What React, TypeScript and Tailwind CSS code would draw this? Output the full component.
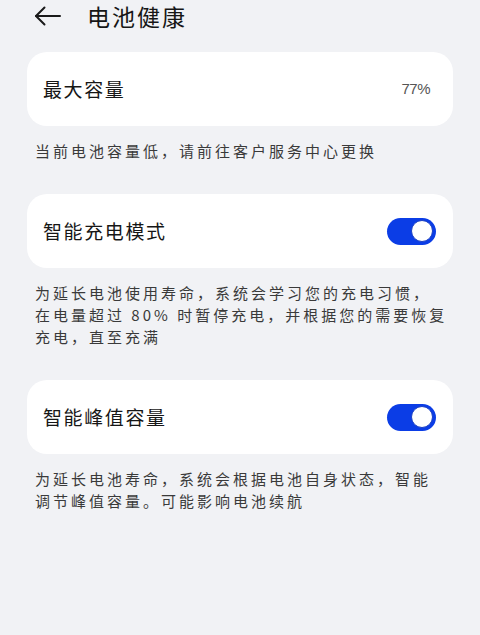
import React from "react";

const font = { fontFamily: '"Noto Sans CJK SC", "Noto Sans", sans-serif' };

const Toggle = () => (
    <div className="w-[49px] h-[27px] rounded-full bg-[#0b3de6] flex items-center justify-end px-[3px]">
        <div className="w-[22px] h-[22px] rounded-full bg-white border-[1.5px] border-[#1a3fc4]"></div>
    </div>
);

const Card = ({ title, right }: { title: string; right: React.ReactNode }) => (
    <div className="mx-[27px] h-[74px] bg-white rounded-[20px] flex items-center justify-between pl-[16px] pr-[17px]">
        <p className="text-[19px] tracking-[1.6px] text-[#161616]">{title}</p>
        {right}
    </div>
);

const Caption = ({ lines }: { lines: string[] }) => (
    <p className="mx-[35px] mt-[14px] mb-[32px] text-[15px] leading-[22px] tracking-[3px] text-[#3a3a3a] whitespace-nowrap">
        {lines.map((l, i) => (
            <React.Fragment key={i}>
                {l}
                {i < lines.length - 1 && <br />}
            </React.Fragment>
        ))}
    </p>
);

export default function App() {
    return (
        <div className="w-[480px] h-[635px] bg-[#f1f2f5] overflow-hidden" style={font}>
            <div className="h-[32px] flex items-center pl-[34px] gap-[26px]">
                <svg width="27" height="20" viewBox="0 0 27 20" fill="none" stroke="#1a1a1a" strokeWidth="2" strokeLinecap="round" strokeLinejoin="round">
                    <path d="M26 10 H2" />
                    <path d="M10.5 1.5 L2 10 L10.5 18.5" />
                </svg>
                <p className="text-[23px] tracking-[2px] text-[#161616]">电池健康</p>
            </div>

            <div className="mt-[20px]">
                <Card title="最大容量" right={<span className="text-[15px] text-[#555] tracking-[-0.5px] mr-[6px]" style={{ fontFamily: '"Liberation Sans", sans-serif' }}>77%</span>} />
                <Caption lines={["当前电池容量低，请前往客户服务中心更换"]} />

                <Card title="智能充电模式" right={<Toggle />} />
                <Caption lines={["为延长电池使用寿命，系统会学习您的充电习惯，", "在电量超过 80% 时暂停充电，并根据您的需要恢复", "充电，直至充满"]} />

                <Card title="智能峰值容量" right={<Toggle />} />
                <Caption lines={["为延长电池寿命，系统会根据电池自身状态，智能", "调节峰值容量。可能影响电池续航"]} />
            </div>
        </div>
    );
}
